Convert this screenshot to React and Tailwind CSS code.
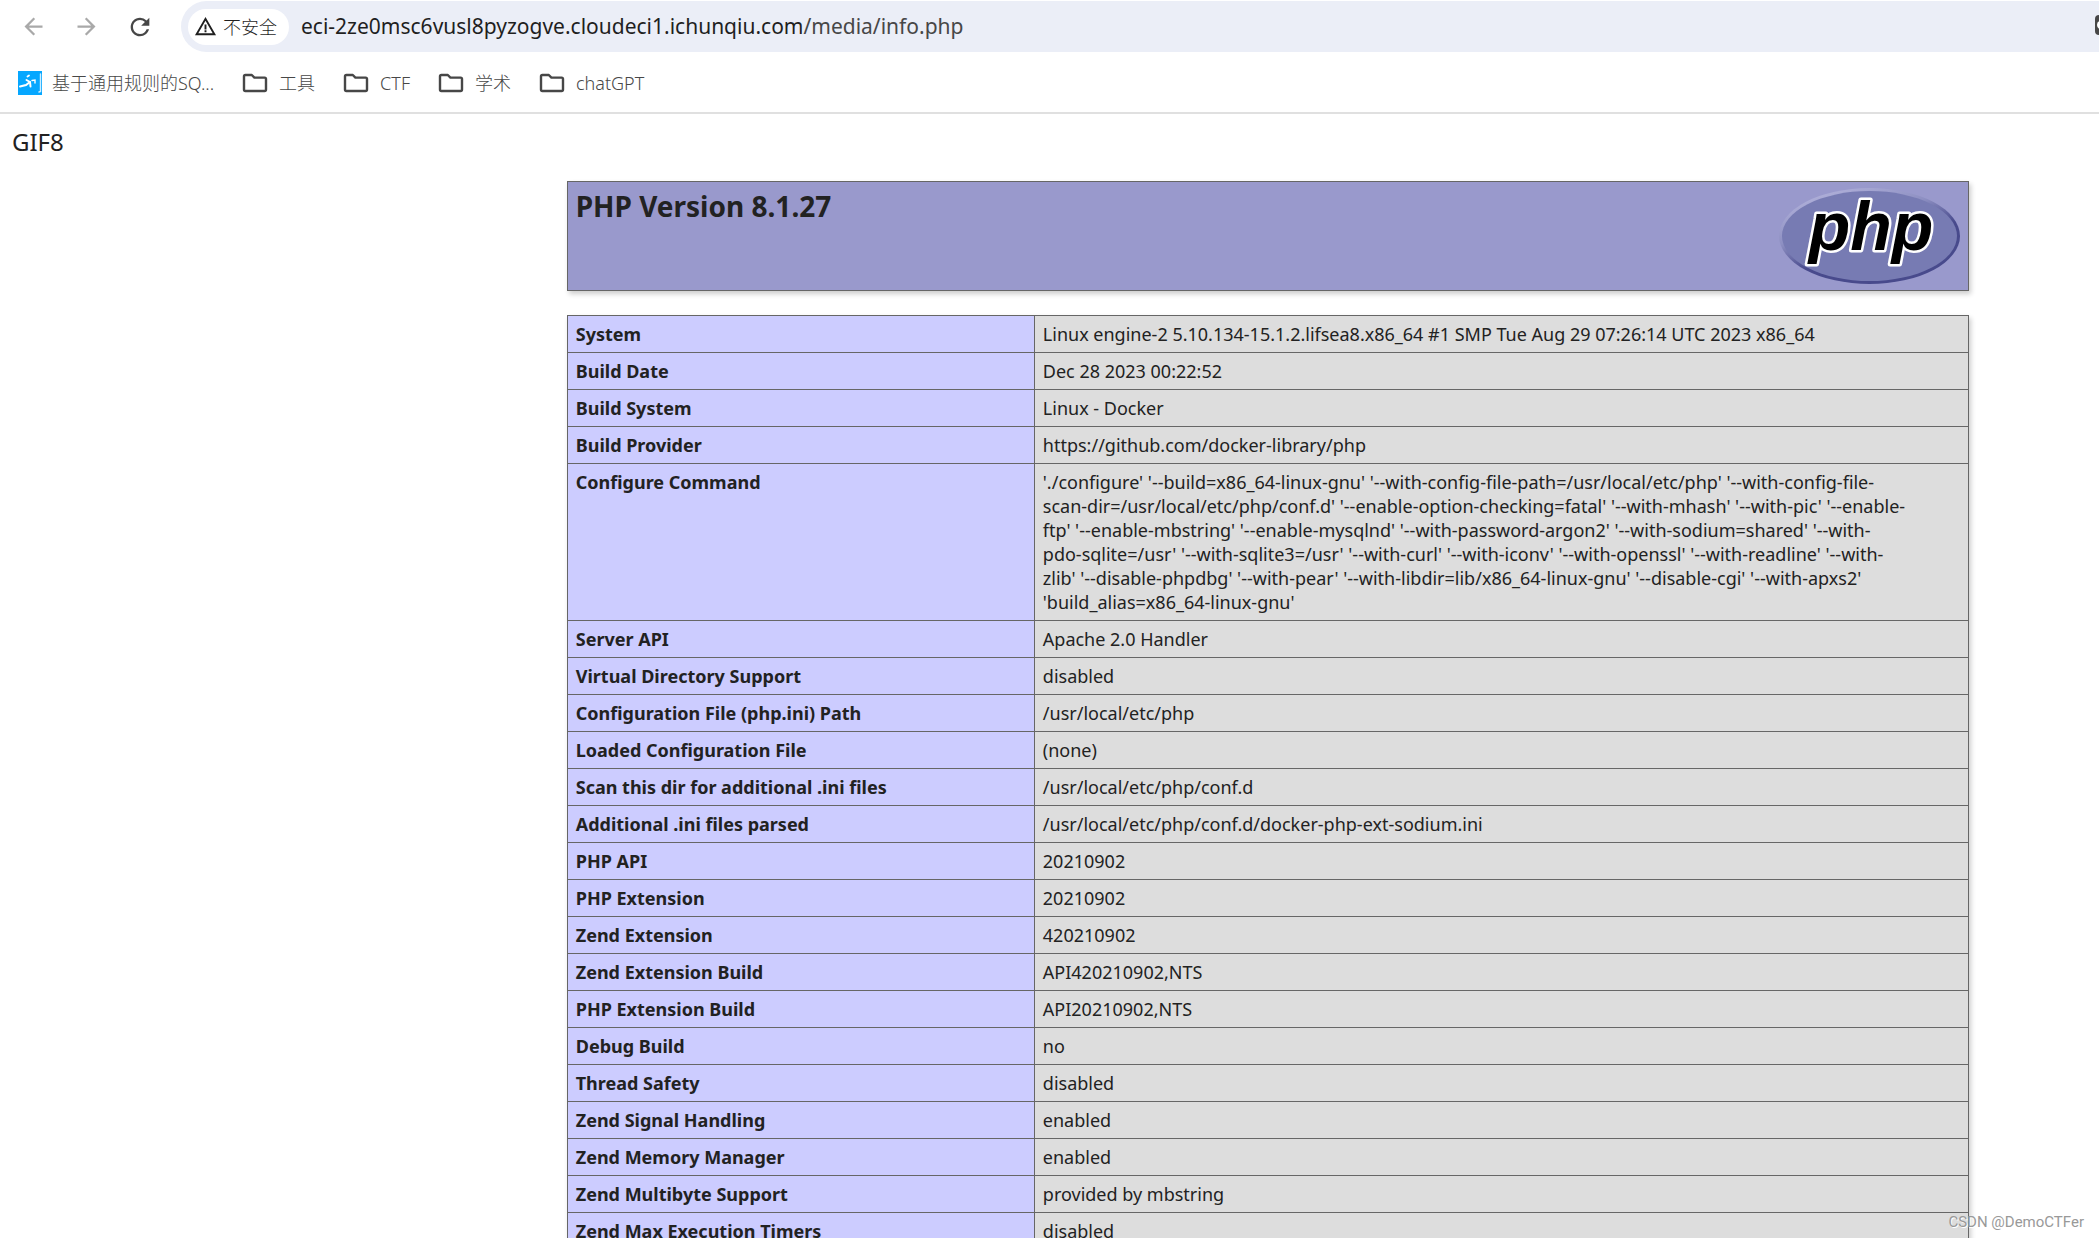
import React from "react";
import { MdArrowBack, MdArrowForward, MdRefresh, MdWarningAmber } from "react-icons/md";

const configureLines = [
  "'./configure' '--build=x86_64-linux-gnu' '--with-config-file-path=/usr/local/etc/php' '--with-config-file-",
  "scan-dir=/usr/local/etc/php/conf.d' '--enable-option-checking=fatal' '--with-mhash' '--with-pic' '--enable-",
  "ftp' '--enable-mbstring' '--enable-mysqlnd' '--with-password-argon2' '--with-sodium=shared' '--with-",
  "pdo-sqlite=/usr' '--with-sqlite3=/usr' '--with-curl' '--with-iconv' '--with-openssl' '--with-readline' '--with-",
  "zlib' '--disable-phpdbg' '--with-pear' '--with-libdir=lib/x86_64-linux-gnu' '--disable-cgi' '--with-apxs2'",
  "'build_alias=x86_64-linux-gnu'",
];

const rows = [
  ["System", "Linux engine-2 5.10.134-15.1.2.lifsea8.x86_64 #1 SMP Tue Aug 29 07:26:14 UTC 2023 x86_64"],
  ["Build Date", "Dec 28 2023 00:22:52"],
  ["Build System", "Linux - Docker"],
  ["Build Provider", "https://github.com/docker-library/php"],
  ["Configure Command", configureLines.join("\n")],
  ["Server API", "Apache 2.0 Handler"],
  ["Virtual Directory Support", "disabled"],
  ["Configuration File (php.ini) Path", "/usr/local/etc/php"],
  ["Loaded Configuration File", "(none)"],
  ["Scan this dir for additional .ini files", "/usr/local/etc/php/conf.d"],
  ["Additional .ini files parsed", "/usr/local/etc/php/conf.d/docker-php-ext-sodium.ini"],
  ["PHP API", "20210902"],
  ["PHP Extension", "20210902"],
  ["Zend Extension", "420210902"],
  ["Zend Extension Build", "API420210902,NTS"],
  ["PHP Extension Build", "API20210902,NTS"],
  ["Debug Build", "no"],
  ["Thread Safety", "disabled"],
  ["Zend Signal Handling", "enabled"],
  ["Zend Memory Manager", "enabled"],
  ["Zend Multibyte Support", "provided by mbstring"],
  ["Zend Max Execution Timers", "disabled"],
];

const folders = ["工具", "CTF", "学术", "chatGPT"];

function FolderIcon() {
  return (
    <svg viewBox="0 0 26 20" className="h-5 w-[26px] shrink-0" fill="none" stroke="#474747" strokeWidth="2.4" strokeLinejoin="round" aria-hidden="true">
      <path d="M2 3.4Q2 2 3.4 2H9.8L12.4 4.6H22.6Q24 4.6 24 6V16.6Q24 18 22.6 18H3.4Q2 18 2 16.6Z" />
    </svg>
  );
}

function SiteIcon() {
  return (
    <svg viewBox="0 0 24 24" className="size-6 shrink-0" aria-hidden="true">
      <rect width="24" height="24" fill="#06a7ff" />
      <g fill="none" stroke="#fff" strokeLinecap="round">
        <path d="M2 15.5L8 14L12 11" strokeWidth="2" />
        <path d="M8.5 9L12 11L12.5 15.5" strokeWidth="2" />
        <path d="M9.5 5.5L11 4.5" strokeWidth="1.8" />
        <path d="M14 9.5L17 9V12" strokeWidth="1.4" />
        <path d="M22.5 3V20.5L21 21" strokeWidth="1.4" opacity=".8" />
      </g>
    </svg>
  );
}

function PhpLogo() {
  return (
    <svg viewBox="0 0 181 96" className="h-24 w-[181px] shrink-0" role="img" aria-label="PHP logo">
      <defs>
        <linearGradient id="rim" x1="0.2" y1="0" x2="0.8" y2="1">
          <stop offset="0" stopColor="#b4b4dc" />
          <stop offset="0.35" stopColor="#8d8fc2" />
          <stop offset="0.6" stopColor="#484a8c" />
          <stop offset="1" stopColor="#484a8c" />
        </linearGradient>
      </defs>
      <ellipse cx="90.5" cy="48" rx="90.5" ry="48" fill="url(#rim)" />
      <ellipse cx="90.5" cy="48" rx="87.5" ry="45" fill="#777bb3" />
      <text
        x="92"
        y="62"
        textAnchor="middle"
        fontFamily="Liberation Sans, sans-serif"
        fontSize="68"
        fontWeight="700"
        fontStyle="italic"
        stroke="#fff"
        strokeWidth="5"
        strokeLinejoin="round"
        fill="#000"
        paintOrder="stroke"
      >
        php
      </text>
    </svg>
  );
}

function Toolbar() {
  return (
    <nav className="flex items-center pt-px" aria-label="Browser">
      <div className="flex w-[181px] shrink-0 items-center gap-[26px] pl-5">
        <button type="button" aria-label="Back" className="text-[#a9a9a9]">
          <MdArrowBack size={27} />
        </button>
        <button type="button" aria-label="Forward" className="text-[#a9a9a9]">
          <MdArrowForward size={27} />
        </button>
        <button type="button" aria-label="Reload" className="text-[#474747]">
          <MdRefresh size={28} />
        </button>
      </div>
      <div className="flex h-[51px] flex-1 items-center overflow-hidden rounded-l-full bg-[#ebeef7] pl-[7px]">
        <button type="button" className="flex h-9 items-center gap-1.5 rounded-full bg-white pr-3 pl-1.5 text-lg font-light text-[#1f1f1f]">
          <MdWarningAmber size={23} />
          不安全
        </button>
        <div className="ml-3 flex-1 text-[21px] text-[#1f1f1f]">
          eci-2ze0msc6vusl8pyzogve.cloudeci1.ichunqiu.com<span className="text-[#474747]">/media/info.php</span>
        </div>
        <button type="button" aria-label="Translate" className="-mr-4 flex h-5 w-5 -translate-y-0.5 items-center rounded-sm bg-[#474747] pl-0.5">
          <span className="size-2 rounded-full border-2 border-white" />
        </button>
      </div>
    </nav>
  );
}

export default function App() {
  return (
    <div className="relative h-screen overflow-hidden bg-white font-['Noto_Sans','Noto_Sans_CJK_SC',sans-serif] text-[#222]">
      <header className="border-b-2 border-[#e0e0e0]">
        <Toolbar />
        <nav aria-label="Bookmarks" className="flex h-[60px] items-center gap-7 pt-px pl-[18px] text-lg font-light text-[#474747]">
          <a href="#" className="flex items-center gap-2.5">
            <SiteIcon />
            基于通用规则的SQ...
          </a>
          {folders.map((name) => (
            <button key={name} type="button" className="flex items-center gap-[11px]">
              <FolderIcon />
              {name}
            </button>
          ))}
        </nav>
      </header>

      <main className="pt-3">
        <p className="px-3 text-2xl leading-8">GIF8</p>

        <div className="mt-[23px] mr-[130px] ml-[27%] flex flex-col gap-6">
          <section className="flex items-start justify-between border border-[#666] bg-[#9999cc] px-2 py-1.5 shadow-[2px_3px_5px_rgba(0,0,0,0.2)]">
            <h1 className="text-[28px] leading-9 font-bold">PHP Version 8.1.27</h1>
            <PhpLogo />
          </section>

          <table className="w-full table-fixed border-collapse text-lg leading-6 shadow-[2px_3px_5px_rgba(0,0,0,0.2)]">
            <tbody>
              {rows.map(([name, value]) => (
                <tr key={name}>
                  <th scope="row" className="w-1/3 border border-[#666] bg-[#ccccff] px-2 py-1.5 text-left align-top font-bold">
                    {name}
                  </th>
                  <td className="border border-[#666] bg-[#dddddd] px-2 py-1.5 align-top whitespace-pre-line">{value}</td>
                </tr>
              ))}
            </tbody>
          </table>
        </div>
      </main>

      <div className="absolute right-[15px] bottom-1.5 font-['Roboto',sans-serif] text-[15px] leading-5 text-[#999] [text-shadow:1px_1px_0_#fff]">
        CSDN @DemoCTFer
      </div>
    </div>
  );
}
